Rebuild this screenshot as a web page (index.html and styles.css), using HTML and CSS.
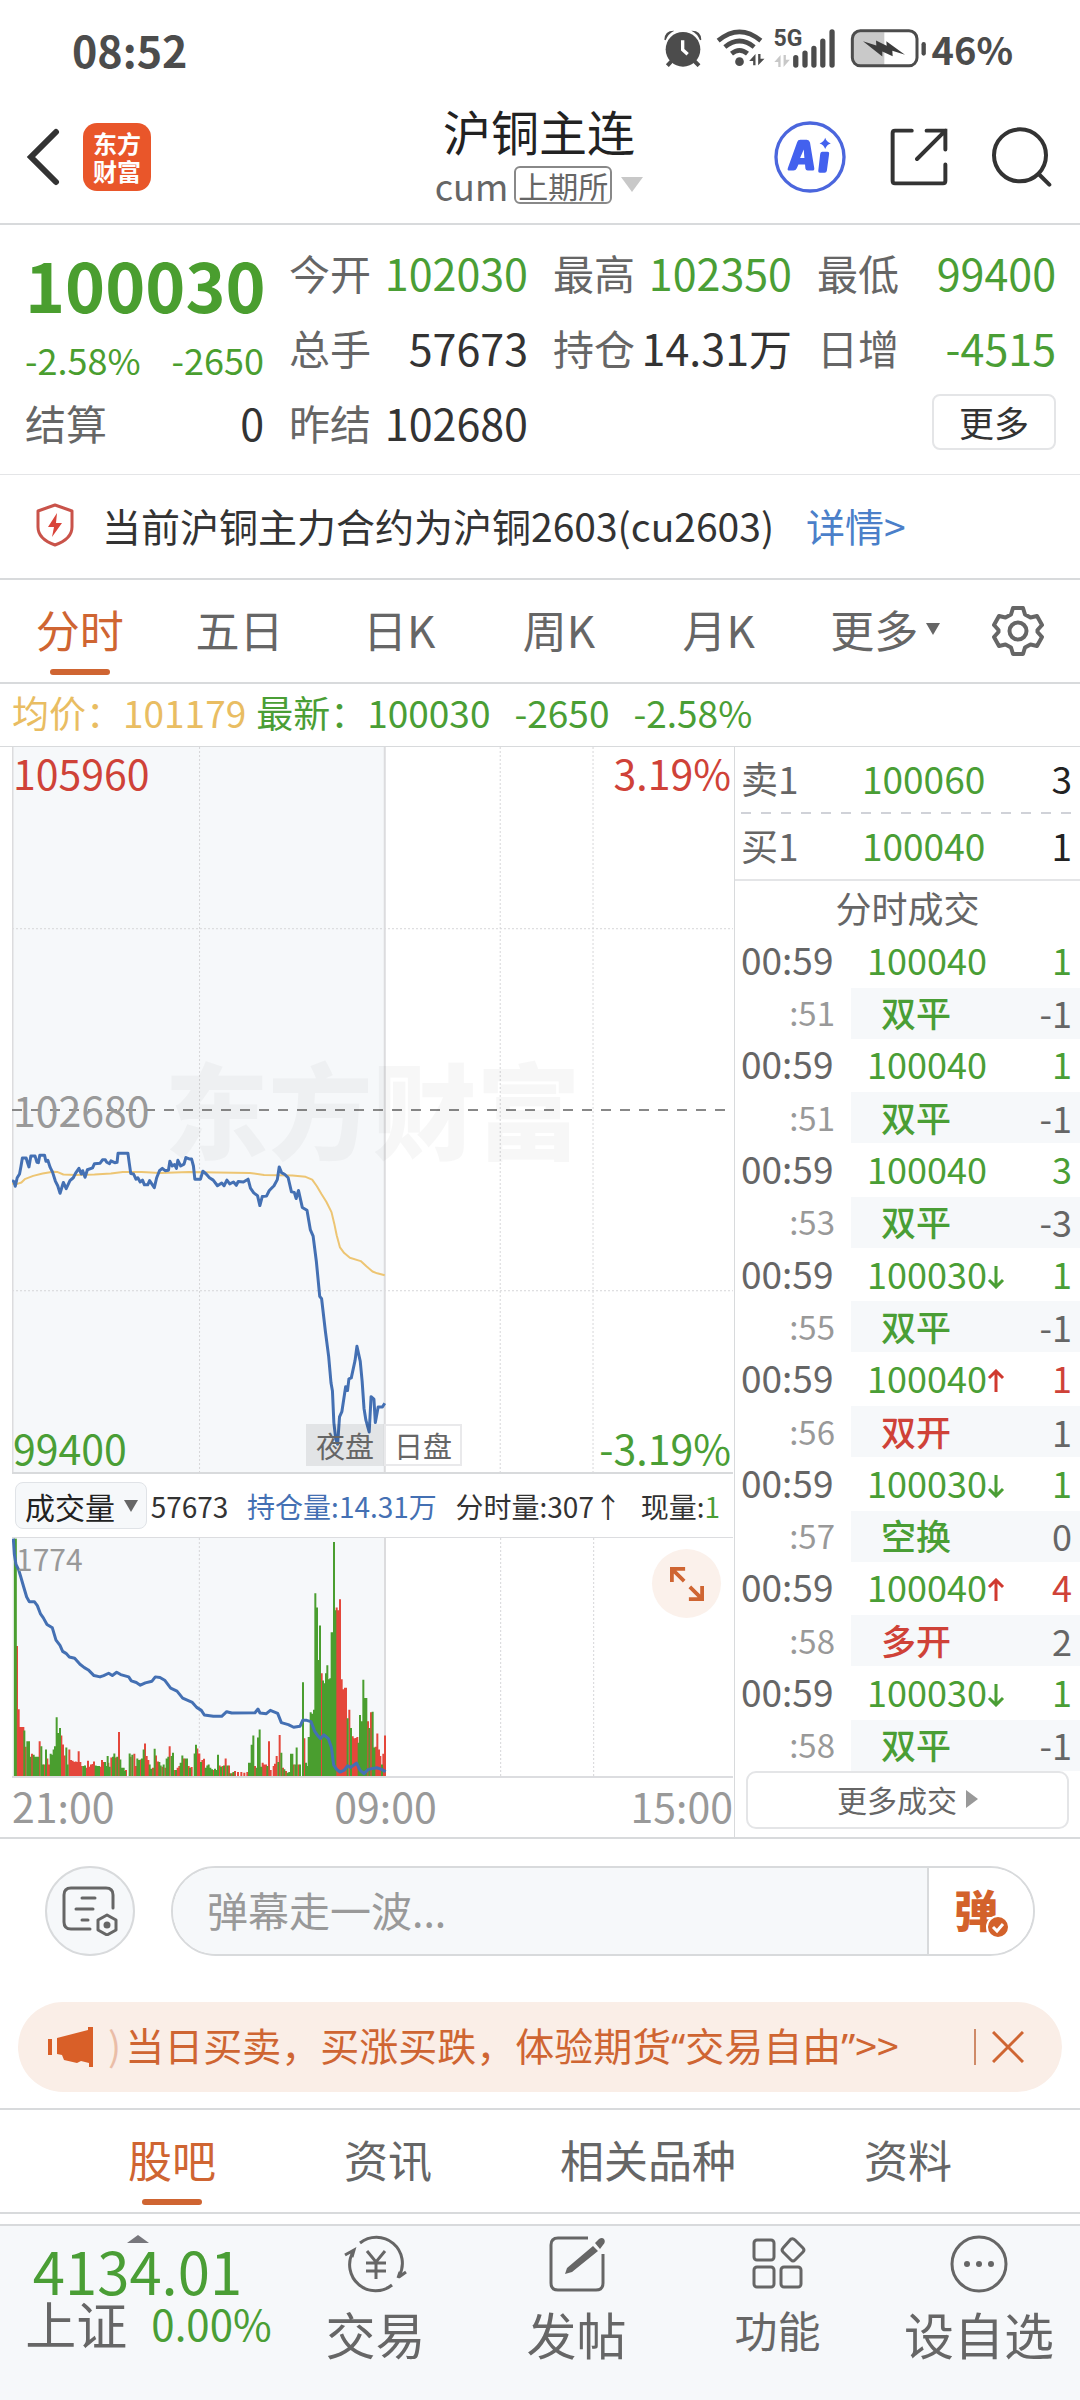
FILE: index.html
```html
<!DOCTYPE html>
<html lang="zh-CN">
<head>
<meta charset="utf-8">
<meta name="viewport" content="width=device-width">
<title>沪铜主连</title>
<link rel="stylesheet" href="styles.css">
</head>
<body>
<div class="app">

<div class="status">
  <span class="clock">08:52</span>
  <div class="status-icons">
    <svg class="i-alarm" viewBox="44 38 114 114"><circle cx="101" cy="99" r="52" fill="#4c4c4c"/><path d="M67 134L54 148M135 134L149 148" stroke="#4c4c4c" stroke-width="12"/><path d="M45 70Q46 42 75 43Q56 52 49 72ZM156 70Q155 42 126 43Q145 52 152 72Z" fill="#4c4c4c"/><path d="M100 72V100L115 114" fill="none" stroke="#fff" stroke-width="10"/></svg>
    <svg class="i-wifi" viewBox="200 34 146 114"><g fill="none" stroke="#4c4c4c" stroke-width="14"><path d="M206 69Q270 16 334 69"/><path d="M226 88Q270 52 314 88"/><path d="M246 108Q270 88 294 108"/></g><circle cx="270" cy="132" r="13" fill="#4c4c4c"/><path d="M318 109V143H311V130H299ZM326 143V109H333V123H345Z" fill="#4c4c4c"/></svg>
    <div class="cell">
      <span class="cell-gen">5G</span>
      <svg class="i-signal" viewBox="374 34 188 116"><path d="M394 112V148H387V133H375ZM403 148V112H410V126H422Z" fill="#c8c8c8"/><path d="M440 120V142M468 106V142M495 92V142M522 70V142M550 42V142" stroke="#4c4c4c" stroke-width="16" stroke-linecap="round"/></svg>
    </div>
    <svg class="i-battery" viewBox="603 33 228 116"><path d="M630 42H706V142H630Q612 142 612 124V60Q612 42 630 42Z" fill="#c9c9c9"/><rect x="610" y="38" width="194" height="105" rx="24" fill="none" stroke="#4c4c4c" stroke-width="9"/><path d="M642 69L682 82L681 67L713 83L712 69L768 110L730 98L731 114L700 100V115Z" fill="#3c3c3c"/><path d="M824 78V106" stroke="#4c4c4c" stroke-width="13" stroke-linecap="round"/></svg>
    <span class="percent">46%</span>
  </div>
</div>

<header class="header">
  <div class="header-side">
    <button class="icon-btn" aria-label="返回"><svg class="i-back" viewBox="0 0 34 58"><path d="M30 4L5 29L30 54" fill="none" stroke="#333" stroke-width="6" stroke-linecap="round"/></svg></button>
    <a class="logo" href="#"><span>东方</span><span>财富</span></a>
  </div>
  <div class="header-title">
    <h1>沪铜主连</h1>
    <div class="sub"><span>cum</span><span class="exchange">上期所</span><svg class="i-caret" viewBox="0 0 22 15"><path d="M0 0H22L11 15Z" fill="#c8c8c8"/></svg></div>
  </div>
  <div class="header-side header-right">
    <button class="icon-btn" aria-label="Ai"><svg class="i-ai" viewBox="367 302 218 218"><circle cx="476" cy="411" r="103" fill="#fff" stroke="#4b66dd" stroke-width="10"/><path d="M437 366Q439 359 447 359H466Q474 359 476 367L489 445Q490 452 483 452H469Q463 452 462 446L461 434H441L436 445Q433 452 426 452H414Q406 452 409 444ZM446 414H459L457 388Z" fill="#4361ee" fill-rule="evenodd"/><path d="M513 395H529Q535 395 534 401L527 453Q526 459 520 459H506Q500 459 501 453L507 401Q508 395 513 395Z" fill="#4361ee"/><path d="M522 353Q526 366 539 370Q526 374 522 387Q518 374 505 370Q518 366 522 353Z" fill="#4361ee"/></svg></button>
    <button class="icon-btn" aria-label="分享"><svg class="i-share" viewBox="712 324 176 176"><g fill="none" stroke="#333" stroke-width="12" stroke-linecap="round"><path d="M778 332H727Q720 332 720 339V485Q720 492 727 492H873Q880 492 880 485V435"/><path d="M823 332H880V389M880 332L794 418"/></g></svg></button>
    <button class="icon-btn" aria-label="搜索"><svg class="i-search" viewBox="1022 320 180 178"><circle cx="1106" cy="404" r="78" fill="none" stroke="#333" stroke-width="12"/><path d="M1162 460L1194 492" stroke="#333" stroke-width="12" stroke-linecap="round"/></svg></button>
  </div>
</header>

<section class="quote">
  <div class="quote-price">
    <div class="last">100030</div>
    <div class="chg"><span>-2.58%</span><span>-2650</span></div>
  </div>
  <dl class="q"><dt>今开</dt><dd class="green">102030</dd></dl>
  <dl class="q"><dt>最高</dt><dd class="green">102350</dd></dl>
  <dl class="q"><dt>最低</dt><dd class="green">99400</dd></dl>
  <dl class="q"><dt>总手</dt><dd>57673</dd></dl>
  <dl class="q"><dt>持仓</dt><dd>14.31万</dd></dl>
  <dl class="q"><dt>日增</dt><dd class="green">-4515</dd></dl>
  <dl class="q"><dt>结算</dt><dd>0</dd></dl>
  <dl class="q"><dt>昨结</dt><dd>102680</dd></dl>
  <div class="q-more"><button class="more-btn">更多</button></div>
</section>

<section class="notice">
  <svg class="i-shield" viewBox="0 0 40 44"><path d="M20 2L37 8V24Q37 36 20 42Q3 36 3 24V8Z" fill="none" stroke="#c9534a" stroke-width="3" stroke-linejoin="round"/><path d="M22 10L13 24H19L17 34L27 20H21Z" fill="#d9443a"/></svg>
  <span>当前沪铜主力合约为沪铜2603(cu2603)</span>
  <a href="#">详情&gt;</a>
</section>

<nav class="periods">
  <button class="tab active">分时</button>
  <button class="tab">五日</button>
  <button class="tab">日K</button>
  <button class="tab">周K</button>
  <button class="tab">月K</button>
  <button class="tab tab-more">更多<svg class="i-drop" viewBox="0 0 14 12"><path d="M0 0H14L7 12Z" fill="#666"/></svg></button>
  <button class="gear" aria-label="设置"><svg class="i-gear" viewBox="0 0 52 52"><path d="M21 3H31L33 9.500L38.500 12.500L45 11L50 20L45.500 25V27L50 32L45 41L38.500 39.500L33 42.500L31 49H21L19 42.500L13.500 39.500L7 41L2 32L6.500 27V25L2 20L7 11L13.500 12.500L19 9.500Z" fill="none" stroke="#666" stroke-width="4" stroke-linejoin="round"/><circle cx="26" cy="26" r="8.500" fill="none" stroke="#666" stroke-width="4"/></svg></button>
</nav>

<div class="legend"><span class="avg">均价：101179</span><span class="now">最新：100030</span><span class="now">-2650</span><span class="now">-2.58%</span></div>

<main class="market">
  <section class="charts">
    <div class="price-chart">
      <svg class="plot" viewBox="25 15 1530 1540" preserveAspectRatio="none">
        <rect x="25" y="15" width="791" height="1540" fill="#f6f8fa"/>
        <g class="grid"><path d="M423 15V1555M1061 15V1555M1258 15V1555M25 401H1555M25 1170H1555"/></g>
        <path class="axis" d="M26 15V1555M816 15V1555"/>
        <path class="mid" d="M25 786H1555"/>
        <path class="line avg-line" d="M25 942L36 943L45 940L52 933L70 926L90 921L112 917L122 918L134 923L160 924L200 923L235 921L260 918L300 918L340 920L400 918L460 919L530 920L560 924L620 925L648 928L662 934L672 948L682 965L692 981L703 1003L709 1028L714 1052L721 1078L730 1090L742 1100L765 1107L777 1118L790 1129L800 1133L816 1137"/>
        <path class="line px-line" d="M25 936L29 938L32 948L36 930L41 922L44 906L47 888H55L58 898L61 907L65 884H74L78 897L81 898L84 882H94L97 895L101 893L106 908L111 918L117 937L122 947L127 963L134 940L140 953L148 936L155 930L160 920L167 910L172 922L175 915L180 929L185 913L196 909L200 900L212 899L217 892L223 892L226 897L232 900L235 894L243 898L248 897L250 878H271L274 900L277 921L283 922L288 933L292 930L297 939L302 935L306 945L313 945L317 936L327 951L332 930L338 915L344 910L350 915L357 914L360 895L365 905L370 902L374 910L377 893L383 905L390 901L394 887L401 890L406 890L410 905L413 933H425L430 916L437 922L444 930L452 935L461 947L470 941L475 947L481 935L487 943L495 939L501 946L505 938L516 939L526 933L531 952L538 962L546 968L551 989L556 970L565 969L571 957L581 947L588 934L592 907L597 919L604 923L611 930L618 960L624 961L628 974L633 957L641 993L651 999L658 1040L664 1054L671 1109L678 1182L682 1187L690 1256L697 1310L702 1366L705 1383L708 1450L712 1485L716 1496L720 1438L725 1427L733 1374L737 1382L740 1357L745 1355L753 1318L757 1288L764 1320L768 1362L772 1420L776 1445L783 1470L787 1395L793 1400L796 1450L802 1417L811 1417L816 1409"/>
      </svg>
      <div class="watermark" aria-hidden="true">东方财富</div>
      <span class="lab at-top at-left red">105960</span>
      <span class="lab at-top at-right red">3.19%</span>
      <span class="lab at-middle at-left gray">102680</span>
      <span class="lab at-bottom at-left green">99400</span>
      <span class="lab at-bottom at-right green">-3.19%</span>
      <div class="sessions"><span class="night">夜盘</span><span class="day">日盘</span></div>
    </div>

    <div class="vol-head">
      <label class="vol-select"><select aria-label="指标"><option>成交量</option></select><svg class="i-drop" viewBox="0 0 14 12"><path d="M0 0H14L7 12Z" fill="#666"/></svg></label>
      <span>57673</span><span class="blue">持仓量:14.31万</span><span>分时量:307↑</span><span>现量:<span class="green">1</span></span>
    </div>

    <div class="vol-chart">
      <svg class="plot" viewBox="36 52 2163 718" preserveAspectRatio="none">
        <rect x="36" y="52" width="1119" height="718" fill="#f6f8fa"/>
        <g class="grid"><path d="M598 52V770M1502 52V770M1781 52V770"/></g>
        <path class="axis" d="M1155 52V770"/>
        <g fill="none" stroke-width="6">
        <path stroke="#e4473b" d="M51 770V378M56 770V569M61 770V622M66 770V622M70 770V622M77 770V682M96 770V703M119 770V665M133 770V735M142 770V717M147 770V735M184 770V648M189 770V675M194 770V708M208 770V690M213 770V722M218 770V724M222 770V728M227 770V726M231 770V728M236 770V695M241 770V728M245 770V740M259 770V745M264 770V724M269 770V742M273 770V735M278 770V734M282 770V726M301 770V742M306 770V722M311 770V728M325 770V730M334 770V714M348 770V714M357 770V637M378 770V752M392 770V712M403 770V703M408 770V740M422 770V720M435 770V672M440 770V710M445 770V722M459 770V745M468 770V708M474 770V726M487 770V742M496 770V745M509 770V680M524 770V752M533 770V745M538 770V740M552 770V717M566 770V740M575 770V743M592 770V687M598 770V702M607 770V722M612 770V718M640 770V752M659 770V738M668 770V740M677 770V717M687 770V738M696 770V762M705 770V755M714 770V758M724 770V758M733 770V760M742 770V758M765 770V740M788 770V730M793 770V735M798 770V735M807 770V665M812 770V752M821 770V740M825 770V733M830 770V710M839 770V646M849 770V745M858 770V755M881 770V735M895 770V735M913 770V656M933 770V592M965 770V460M1010 770V262M1015 770V270M1020 770V237M1025 770V478M1030 770V508M1035 770V504M1038 770V504M1048 770V570M1058 770V650M1063 770V656M1068 770V655M1072 770V652M1104 770V605M1113 770V578M1127 770V682M1132 770V642M1137 770V690M1141 770V710M1150 770V703M1155 770V648"/>
        <path stroke="#4a9e2f" d="M73 770V633M82 770V665M87 770V665M91 770V712M101 770V706M105 770V712M110 770V712M115 770V712M124 770V680M129 770V735M138 770V690M152 770V703M156 770V706M161 770V690M165 770V680M170 770V593M175 770V640M180 770V625M199 770V684M203 770V735M250 770V740M255 770V738M287 770V738M292 770V740M297 770V740M315 770V728M320 770V740M323 770V710M329 770V742M339 770V712M343 770V702M352 770V712M361 770V720M366 770V745M371 770V745M375 770V755M389 770V702M397 770V706M412 770V717M417 770V722M426 770V717M431 770V690M449 770V735M454 770V748M464 770V688M478 770V728M482 770V738M491 770V735M500 770V717M505 770V712M515 770V710M519 770V700M528 770V752M542 770V730M547 770V708M557 770V717M561 770V717M570 770V745M584 770V702M588 770V676M603 770V728M617 770V745M622 770V738M626 770V735M631 770V745M636 770V750M645 770V748M650 770V752M654 770V706M663 770V742M672 770V738M682 770V738M691 770V762M700 770V758M747 770V730M751 770V730M755 770V676M760 770V648M770 770V745M774 770V654M779 770V630M784 770V742M802 770V740M835 770V728M844 770V700M853 770V750M863 770V760M868 770V758M873 770V703M877 770V703M886 770V735M890 770V684M900 770V735M909 770V487M918 770V730M922 770V740M926 770V652M932 770V578M937 770V582M942 770V570M946 770V219M951 770V262M956 770V420M960 770V316M969 770V482M974 770V490M978 770V460M982 770V436M987 770V478M991 770V475M995 770V336M999 770V336M1002 770V64M1006 770V270M1043 770V596M1053 770V625M1076 770V670M1080 770V586M1085 770V605M1090 770V480M1095 770V535M1099 770V535M1108 770V625M1118 770V576M1123 770V684M1146 770V735"/>
        <path stroke="#4a9e2f" stroke-width="9" d="M46 770V54"/>
        </g>
        <path class="line px-line" d="M40 54L43 100L48 132L56 148L62 168L70 196L80 230L88 244H103L112 256L121 280L130 293L141 313L157 323L168 360L180 376L188 394L198 400L208 411L224 415L240 433L253 443L265 450L282 467L300 471L311 467L326 460L337 467L350 457L362 464L386 471L394 483L409 488L421 496L436 489L456 484L466 471L480 473L494 481L512 505L531 514L548 535L577 548L590 563L604 572L613 586L640 590H665L680 576L695 580L765 579L774 568L780 580L799 582L811 572L833 581L844 609L865 615L881 623L900 620L908 602H920L933 606L944 635L953 648L961 657L972 646L985 657L994 683L1001 737L1010 750L1020 758L1033 752L1043 739L1052 744L1070 731L1080 752L1092 763L1105 750L1130 745L1145 750L1157 757"/>
      </svg>
      <span class="vol-max">1774</span>
      <button class="expand" aria-label="全屏"><svg class="i-expand" viewBox="0 0 36 36"><path d="M2 16V2H16M3 3L15 15M34 20V34H20M33 33L21 21" fill="none" stroke="#cf6532" stroke-width="4"/></svg></button>
    </div>
    <div class="times"><span>21:00</span><span>09:00</span><span>15:00</span></div>
  </section>

  <aside class="side">
    <div class="book"><span>卖1</span><span class="green">100060</span><span class="qty">3</span></div>
    <svg class="dash" viewBox="0 0 330 2" preserveAspectRatio="none"><path d="M0 1H330" stroke="#d0d2d8" stroke-width="2" stroke-dasharray="10 10"/></svg>
    <div class="book"><span>买1</span><span class="green">100040</span><span class="qty">1</span></div>
    <h2>分时成交</h2>
    <table class="trades">
      <tr><td>00:59</td><td class="green">100040</td><td class="green">1</td></tr>
      <tr class="alt"><td>:51</td><td class="green">双平</td><td>-1</td></tr>
      <tr><td>00:59</td><td class="green">100040</td><td class="green">1</td></tr>
      <tr class="alt"><td>:51</td><td class="green">双平</td><td>-1</td></tr>
      <tr><td>00:59</td><td class="green">100040</td><td class="green">3</td></tr>
      <tr class="alt"><td>:53</td><td class="green">双平</td><td>-3</td></tr>
      <tr><td>00:59</td><td class="green">100030<svg class="i-dir" viewBox="0 0 18 24"><path d="M9 1V21M2 15L9 22L16 15" fill="none" stroke="#4a9e35" stroke-width="3"/></svg></td><td class="green">1</td></tr>
      <tr class="alt"><td>:55</td><td class="green">双平</td><td>-1</td></tr>
      <tr><td>00:59</td><td class="green">100040<svg class="i-dir" viewBox="0 0 18 24"><path d="M9 23V3M2 9L9 2L16 9" fill="none" stroke="#d0392f" stroke-width="3"/></svg></td><td class="red">1</td></tr>
      <tr class="alt"><td>:56</td><td class="red">双开</td><td>1</td></tr>
      <tr><td>00:59</td><td class="green">100030<svg class="i-dir" viewBox="0 0 18 24"><path d="M9 1V21M2 15L9 22L16 15" fill="none" stroke="#4a9e35" stroke-width="3"/></svg></td><td class="green">1</td></tr>
      <tr class="alt"><td>:57</td><td class="green">空换</td><td>0</td></tr>
      <tr><td>00:59</td><td class="green">100040<svg class="i-dir" viewBox="0 0 18 24"><path d="M9 23V3M2 9L9 2L16 9" fill="none" stroke="#d0392f" stroke-width="3"/></svg></td><td class="red">4</td></tr>
      <tr class="alt"><td>:58</td><td class="red">多开</td><td>2</td></tr>
      <tr><td>00:59</td><td class="green">100030<svg class="i-dir" viewBox="0 0 18 24"><path d="M9 1V21M2 15L9 22L16 15" fill="none" stroke="#4a9e35" stroke-width="3"/></svg></td><td class="green">1</td></tr>
      <tr class="alt"><td>:58</td><td class="green">双平</td><td>-1</td></tr>
    </table>
    <button class="more-trades">更多成交<svg class="i-right" viewBox="0 0 12 18"><path d="M0 0L12 9L0 18Z" fill="#999"/></svg></button>
  </aside>
</main>

<section class="danmu">
  <button class="danmu-set" aria-label="弹幕设置"><svg class="i-set" viewBox="0 0 56 50"><g fill="none" stroke="#666" stroke-width="3" stroke-linecap="round"><path d="M51 22V9Q51 2 44 2H9Q2 2 2 9V36Q2 43 9 43H28"/><path d="M20 12H33M14 23H31M20 34H26"/><path d="M45 29L54 34V44L45 49L36 44V34Z" stroke-linejoin="round"/></g><circle cx="45" cy="39" r="3.500" fill="#666"/></svg></button>
  <div class="danmu-box">
    <input type="text" placeholder="弹幕走一波..." aria-label="弹幕">
    <button class="danmu-toggle"><span>弹</span><svg class="i-check" viewBox="0 0 24 24"><circle cx="12" cy="12" r="11" fill="#d3622b" stroke="#fff" stroke-width="2"/><path d="M7 12L11 16L17 9" fill="none" stroke="#fff" stroke-width="3"/></svg></button>
  </div>
</section>

<section class="promo">
  <svg class="i-horn" viewBox="0 0 46 40"><path d="M0 12H4V28H0ZM9 11L40 3V0H45V40H41V36L33 34L29 36L16 33L14 28L9 27Z" fill="#d95f28"/></svg>
  <a class="promo-text" href="#"><span class="fade">)</span>当日买卖，买涨买跌，体验期货<span class="mark">“</span>交易自由<span class="mark">”</span>&gt;&gt;</a>
  <span class="promo-sep"></span>
  <button class="icon-btn" aria-label="关闭"><svg class="i-close" viewBox="0 0 32 32"><path d="M1 1L31 31M31 1L1 31" stroke="#cf6532" stroke-width="3"/></svg></button>
</section>

<nav class="sections">
  <a class="tab active" href="#">股吧</a><a class="tab" href="#">资讯</a><a class="tab" href="#">相关品种</a><a class="tab" href="#">资料</a>
</nav>

<footer class="toolbar">
  <a class="index" href="#">
    <svg class="i-up" viewBox="0 0 22 8"><path d="M11 0L22 8H0Z" fill="#77777c"/></svg>
    <span class="index-val">4134.01</span>
    <span class="index-row"><span class="index-name">上证</span><span class="index-pct">0.00%</span></span>
  </a>
  <a class="nav" href="#"><svg class="i-nav" viewBox="0 0 64 60"><g fill="none" stroke="#666" stroke-width="3"><path d="M16 9A26 26 0 0 1 55 42M54 44L56 38M55 43L62 38M48 51A26 26 0 0 1 9 18M1 21L10 16L8 23"/><path d="M23 17L32 28L41 17M32 28V45M22 29H42M22 37H42"/></g></svg><span>交易</span></a>
  <a class="nav" href="#"><svg class="i-nav" viewBox="0 0 64 60"><path d="M43 4H13Q6 4 6 11V49Q6 56 13 56H51Q58 56 58 49V20" fill="none" stroke="#666" stroke-width="3"/><path d="M48 12L53 17L27 38L20 40L22 34ZM50 9L54 5Q57 3 59 5Q61 8 58 11L55 15Z" fill="#666"/></svg><span>发帖</span></a>
  <a class="nav nav-small" href="#"><svg class="i-nav" viewBox="0 0 64 60"><g fill="none" stroke="#666" stroke-width="3"><rect x="8" y="6" width="20" height="20" rx="3"/><rect x="8" y="33" width="20" height="20" rx="3"/><rect x="35" y="33" width="20" height="20" rx="3"/><path d="M45 5Q47 4 49 6L57 14Q59 16 57 18L49 26Q47 28 45 26L37 18Q35 16 37 14Z"/></g></svg><span>功能</span></a>
  <a class="nav" href="#"><svg class="i-nav" viewBox="0 0 64 60"><circle cx="32" cy="30" r="27" fill="none" stroke="#666" stroke-width="3"/><circle cx="20" cy="30" r="3" fill="#666"/><circle cx="32" cy="30" r="3" fill="#666"/><circle cx="44" cy="30" r="3" fill="#666"/></svg><span>设自选</span></a>
</footer>
</div>
</body>
</html>
```
FILE: styles.css
```css
* { box-sizing: border-box; }
body {
  margin: 0;
  background: #fff;
  color: #333;
  font-family: "Noto Sans CJK SC", "Noto Sans", sans-serif;
  font-size: 36px;
}
button, input, select { font: inherit; color: inherit; border: 0; background: none; padding: 0; margin: 0; }
a { color: inherit; text-decoration: none; }
h1, h2, dl, dd { margin: 0; font-weight: 400; }
svg { display: block; flex: none; }
.app { min-height: 100vh; display: flex; flex-direction: column; white-space: nowrap; }
.green { color: #4a9e35; }
.red { color: #cf4238; }
.blue { color: #4470b3; }
.gray { color: #999; }
.icon-btn { display: flex; }

/* status bar */
.status { display: flex; justify-content: space-between; align-items: center; height: 96px; padding: 0 67px 0 72px; color: #4c4c4c; font-weight: 700; }
.clock { font-size: 43px; line-height: 60px; padding-top: 2px; }
.percent { font-size: 38px; line-height: 60px; margin-left: -8px; padding-top: 2px; }
.status-icons { display: flex; align-items: center; gap: 14px; }
.i-alarm { width: 38px; height: 38px; }
.i-wifi { width: 49px; height: 38px; margin-right: -5px; }
.cell { position: relative; }
.cell-gen { position: absolute; left: 0; top: 0; font: 700 23px/20px Roboto, sans-serif; }
.i-signal { width: 62px; height: 39px; }
.i-battery { width: 76px; height: 39px; }

/* header */
.header { display: flex; align-items: center; height: 129px; padding: 0 28px 6px 26px; border-bottom: 2px solid #d8dadc; }
.header-side { flex: 1; display: flex; align-items: center; gap: 23px; }
.header-right { justify-content: flex-end; gap: 44px; }
.i-back { width: 34px; height: 58px; }
.logo { width: 68px; height: 68px; border-radius: 14px; background: #e9562a; color: #fff; font-size: 24px; line-height: 28px; font-weight: 700; display: flex; flex-direction: column; align-items: center; justify-content: center; }
.header-title { display: flex; flex-direction: column; align-items: center; }
.header-title h1 { font-size: 48px; line-height: 56px; color: #222; }
.sub { display: flex; align-items: center; gap: 6px; line-height: 54px; color: #666; }
.exchange { border: 2px solid #888; border-radius: 6px; font-size: 30px; line-height: 34px; padding: 0 2px; }
.i-caret { width: 22px; height: 15px; margin-left: 3px; }
.i-ai { width: 72px; height: 72px; }
.i-share { width: 58px; height: 58px; }
.i-search { width: 60px; height: 60px; }

/* quote */
.quote { display: grid; grid-template-columns: repeat(4, minmax(0, 1fr)); grid-auto-rows: 75px; column-gap: 25px; padding: 9px 24px 15px 25px; border-bottom: 1px solid #e4e5e7; }
.quote-price { grid-row: span 2; color: #4a9e2f; }
.last { font-size: 68px; line-height: 100px; font-weight: 700; text-align: right; }
.chg { display: flex; justify-content: space-between; line-height: 50px; }
.q { display: flex; justify-content: space-between; align-items: center; }
.q dt { font-size: 41px; color: #666; }
.q dd { font-size: 43px; }
.q-more { grid-column: 4; display: flex; justify-content: flex-end; align-items: center; }
.more-btn { width: 124px; height: 56px; border: 2px solid #e4e5e7; border-radius: 8px; font-size: 35px; line-height: 48px; }

/* notice */
.notice { display: flex; align-items: center; height: 105px; padding: 0 35px 4px; border-bottom: 2px solid #d8dadc; font-size: 39px; }
.i-shield { width: 40px; height: 44px; margin-right: 27px; }
.notice a { color: #4b7fc9; margin-left: 32px; }

/* period tabs */
.periods { display: grid; grid-template-columns: repeat(6, minmax(0, 4fr)) minmax(0, 3fr); height: 104px; padding-right: 2px; border-bottom: 2px solid #d8dadc; }
.tab { position: relative; font-size: 44px; color: #666; display: flex; align-items: center; justify-content: center; }
.periods .tab { padding-bottom: 4px; }
.periods .gear { display: flex; align-items: center; justify-content: center; }
.tab.active { color: #cf6532; }
.tab.active::after { content: ""; position: absolute; left: 50%; bottom: 7px; width: 60px; height: 6px; margin-left: -30px; border-radius: 3px; background: #cf6532; }
.periods .tab-more { gap: 8px; padding-left: 14px; }
.i-drop { width: 14px; height: 12px; }
.i-gear { width: 52px; height: 52px; }

.legend { display: flex; gap: 24px; height: 63px; padding: 0 12px; font-size: 37px; line-height: 57px; border-bottom: 1px solid #d8dadc; }
.avg { color: #e9bd62; margin-right: -14px; }
.now { color: #4a9e35; }

/* charts */
.market { display: grid; grid-template-columns: 49fr 23fr; border-bottom: 2px solid #d8dadc; }
.charts { border-right: 1px solid #d8dadc; padding: 0 1px 5px 12px; }
.price-chart { position: relative; height: 727px; border-bottom: 2px solid #d8dadc; }
.plot { width: 100%; height: 100%; }
.plot path { vector-effect: non-scaling-stroke; }
.vol-chart .plot g[stroke-width] path { vector-effect: none; }
.grid path { stroke: #d6d6d8; stroke-width: 1; stroke-dasharray: 2 2; }
.axis { stroke: #dcdcde; stroke-width: 2; }
.mid { stroke: #888; stroke-width: 2; stroke-dasharray: 10 9; }
.line { fill: none; stroke-linejoin: round; }
.avg-line { stroke: #edc573; stroke-width: 2; }
.px-line { stroke: #4470b3; stroke-width: 3; }
.lab { position: absolute; font-size: 41px; line-height: 44px; }
.at-top { top: 3px; }
.at-middle { top: 340px; }
.at-bottom { bottom: 3px; }
.at-left { left: 1px; }
.at-right { right: 2px; }
.watermark { position: absolute; left: 0; right: 0; top: 300px; text-align: center; font-size: 104px; line-height: 120px; font-weight: 900; color: rgba(0, 0, 0, .03); }
.sessions { position: absolute; left: 294px; bottom: 6px; display: flex; font-size: 29px; line-height: 38px; color: #666; }
.sessions span { border: 2px solid #e9e9eb; padding: 0 8px; }
.sessions .night { background: rgba(0, 0, 0, .08); border-color: transparent; }

.vol-head { display: flex; align-items: center; justify-content: space-between; height: 63px; padding: 0 13px 0 3px; font-size: 28px; }
.vol-select { display: flex; align-items: center; width: 132px; height: 47px; margin-right: -15px; padding: 0 9px; border: 1px solid #e0e3e7; border-radius: 8px; background: #f6f8fa; }
.vol-select select { appearance: none; flex: none; width: 99px; font-size: 30px; line-height: 40px; height: 42px; color: #222; }
.vol-chart { position: relative; height: 241px; border-top: 1px solid #dcdde0; border-bottom: 2px solid #dcdde0; }
.vol-max { position: absolute; left: 4px; top: 2px; font-size: 30px; line-height: 36px; color: #999; }
.expand { position: absolute; right: 12px; top: 11px; width: 69px; height: 69px; border-radius: 50%; background: #fbf1eb; display: flex; align-items: center; justify-content: center; }
.i-expand { width: 34px; height: 34px; }
.times { display: grid; grid-template-columns: 258fr 231fr 232fr; color: #999; font-size: 41px; line-height: 54px; }
.times span:nth-child(2) { text-align: center; }
.times span:nth-child(3) { text-align: right; }

/* order book and trades */
.side { color: #666; }
.book { display: flex; align-items: center; height: 65px; padding: 0 8px 4px 6px; font-size: 37px; }
.book span:first-child { width: 121px; }
.book .qty { margin-left: auto; color: #222; }
.dash { width: auto; height: 2px; margin: 0 8px 0 6px; }
.side h2 { font-size: 36px; line-height: 53px; text-align: center; border-top: 2px solid #e4e5e7; }
.trades { width: 100%; height: 837px; border-collapse: collapse; table-layout: fixed; line-height: 40px; }
.trades td { padding: 0 0 4px 16px; }
.trades td:first-child { width: 116px; padding-left: 6px; padding-right: 8px; font-size: 37px; }
.trades td:last-child { width: 70px; text-align: right; padding-left: 0; padding-right: 8px; }
.trades .alt td { background: #f6f8fa; padding-left: 30px; padding-bottom: 2px; }
.trades .alt td:first-child { background: none; text-align: right; font-size: 33px; color: #999; padding-right: 16px; }
.trades .alt td:last-child { padding-left: 0; }
.trades .alt td:nth-child(2) { font-size: 35px; font-weight: 500; }
.i-dir { display: inline-block; width: 18px; height: 24px; }
.more-trades { display: flex; align-items: center; justify-content: center; gap: 9px; width: calc(100% - 22px); height: 58px; margin-left: 11px; padding-bottom: 3px; border: 2px solid #e4e5e7; border-radius: 10px; font-size: 30px; color: #666; }
.i-right { width: 12px; height: 18px; }

/* comment bar */
.danmu { display: flex; gap: 36px; padding: 27px 45px 46px; }
.danmu-set { width: 90px; height: 90px; flex: none; border: 2px solid #d8dadc; border-radius: 50%; background: #f6f8fa; display: flex; align-items: center; justify-content: center; }
.i-set { width: 56px; height: 50px; }
.danmu-box { flex: 1; display: flex; height: 90px; border: 2px solid #d8dadc; border-radius: 45px; overflow: hidden; }
.danmu-box input { flex: 1; min-width: 0; padding: 0 34px 4px; font-size: 41px; background: #f6f8fa; }
.danmu-box input::placeholder { color: #999; opacity: 1; }
.danmu-toggle { position: relative; width: 106px; padding: 0 10px 4px 0; border-left: 2px solid #d8dadc; background: #fff; color: #d3622b; font-size: 44px; font-weight: 900; }
.i-check { position: absolute; left: 57px; top: 47px; width: 24px; height: 24px; }

/* promo */
.promo { display: flex; align-items: center; height: 90px; margin: 0 18px 16px; padding: 0 38px 0 30px; border-radius: 45px; background: #faeee7; color: #cf6532; font-size: 39px; }
.i-horn { width: 46px; height: 40px; margin-right: 14px; }
.promo-text { padding-bottom: 6px; }
.mark { font-family: "Noto Sans", sans-serif; }
.fade { opacity: .35; margin-right: 4px; }
.promo-sep { width: 2px; height: 36px; margin: 0 16px 0 auto; background: #cf8a68; }
.i-close { width: 32px; height: 32px; }

/* section tabs */
.sections { display: flex; justify-content: space-evenly; height: 106px; border-top: 2px solid #d8dadc; border-bottom: 2px solid #d8dadc; }
.sections .tab { padding-bottom: 5px; }

/* bottom bar */
.toolbar { flex: 1; display: grid; grid-template-columns: 275fr 201fr 201fr 201fr 202fr; margin-top: 10px; border-top: 2px solid #d8dadc; background: #f6f8fa; color: #666; }
.index { display: flex; flex-direction: column; align-items: center; padding-top: 9px; }
.i-up { width: 22px; height: 8px; }
.index-val { font-size: 58px; line-height: 55px; color: #4a9e35; }
.index-row { display: flex; align-items: center; gap: 24px; line-height: 50px; padding-left: 22px; }
.index-name { font-size: 51px; }
.index-pct { font-size: 42px; color: #4a9e35; }
.nav { display: flex; flex-direction: column; align-items: center; padding-top: 8px; font-size: 50px; line-height: 78px; }
.nav-small { font-size: 43px; line-height: 70px; }
.i-nav { width: 64px; height: 60px; }
```
